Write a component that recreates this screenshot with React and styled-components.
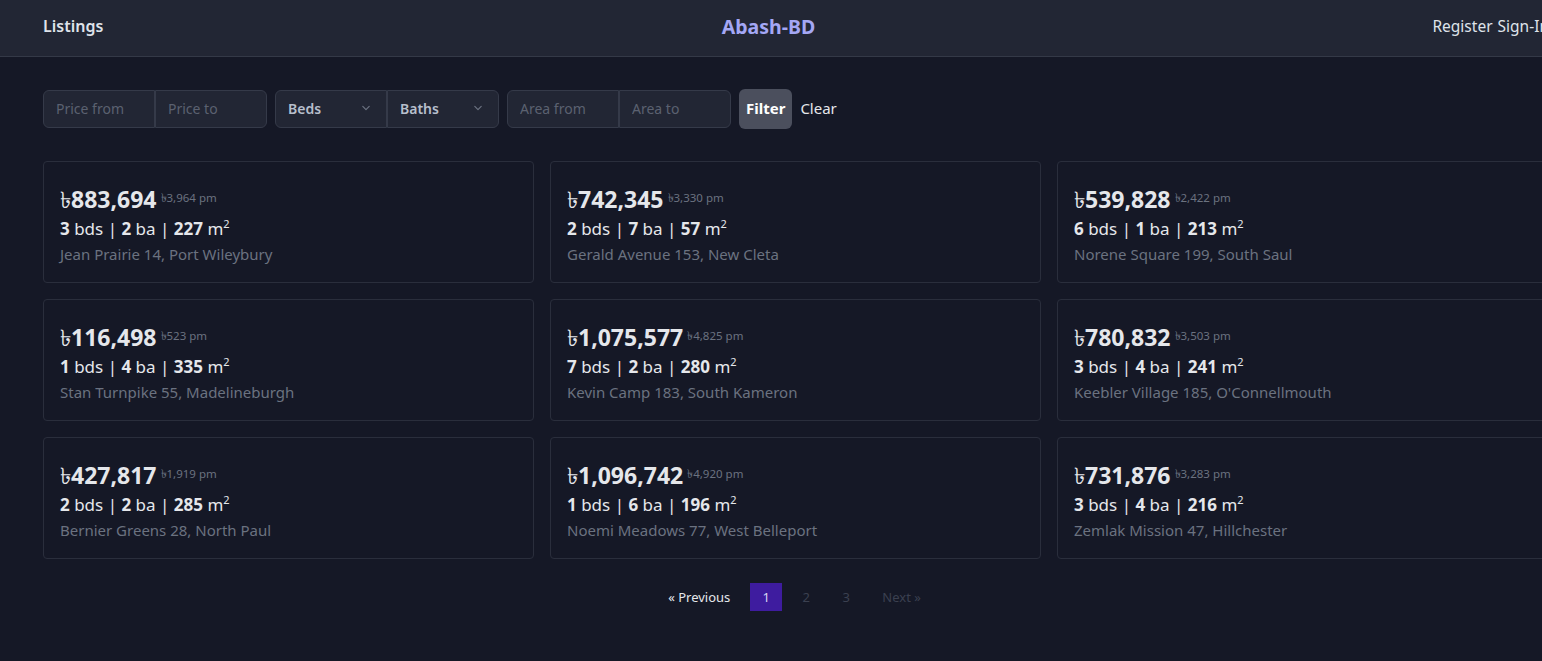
import React from 'react';
import styled, { createGlobalStyle } from 'styled-components';

const GlobalStyle = createGlobalStyle`
  html, body {
    margin: 0;
    padding: 0;
    background: #151826;
    overflow-x: hidden;
  }
  body {
    font-family: "Noto Sans", "Open Sans", sans-serif;
    color: #e5e7eb;
  }
  * { box-sizing: border-box; }
`;

const Page = styled.div`
  min-height: 661px;
  width: 1589px;
`;

const Header = styled.header`
  display: grid;
  grid-template-columns: 1fr auto 1fr;
  align-items: center;
  height: 57px;
  padding: 0 43px 4px;
  width: 1542px;
  background: #222634;
  border-bottom: 1px solid #343947;
`;

const NavLink = styled.a`
  font-size: 16px;
  font-weight: ${({ bold }) => (bold ? 600 : 400)};
  color: #dfe3ea;
  text-decoration: none;
`;

const Brand = styled.div`
  font-size: 19.5px;
  font-weight: 700;
  color: #a4a7f5;
  margin-right: 5px;
`;

const RightNav = styled.nav`
  display: flex;
  justify-content: flex-end;
  gap: 5px;
  margin-right: -50px;
  white-space: nowrap;
  a { font-size: 15.5px; }
`;

const Main = styled.main`
  padding: 32px 43px 40px;
`;

const FilterBar = styled.form`
  display: flex;
  align-items: center;
  gap: 8px;
  margin-bottom: 32px;
`;

const Group = styled.div`
  display: flex;
`;

const Field = styled.input`
  width: 112px;
  height: 38px;
  padding: 0 12px 2px;
  background: #222634;
  border: 1px solid #353a49;
  color: #dfe3ea;
  font-family: inherit;
  font-size: 14px;
  border-radius: ${({ first }) => (first ? '6px 0 0 6px' : '0 6px 6px 0')};
  &::placeholder { color: #5b6170; }
  outline: none;
`;

const Select = styled.div`
  display: flex;
  align-items: center;
  justify-content: space-between;
  width: 112px;
  height: 38px;
  padding: 0 12px 2px 12px;
  background: #222634;
  border: 1px solid #353a49;
  border-radius: ${({ first }) => (first ? '6px 0 0 6px' : '0 6px 6px 0')};
  font-size: 14px;
  font-weight: 600;
  color: #b7bfcc;
`;

const Button = styled.button`
  height: 40px;
  padding: 0 7px 2px;
  border: none;
  border-radius: 6px;
  background: #4b4f5d;
  color: #fff;
  font-family: inherit;
  font-size: 15px;
  font-weight: 700;
`;

const ClearLink = styled.span`
  font-size: 15px;
  color: #e5e7eb;
  margin-bottom: 2px;
`;

const Grid = styled.div`
  display: grid;
  grid-template-columns: repeat(3, 491px);
  gap: 16px;
`;

const Card = styled.div`
  height: 122px;
  padding: 22px 16px 0;
  border: 1px solid #2a2e3c;
  border-radius: 4px;
`;

const PriceRow = styled.div`
  display: flex;
  align-items: flex-start;
  gap: 4px;
  line-height: 30px;
`;

const Price = styled.span`
  font-size: 23px;
  font-weight: 700;
  color: #e5e7eb;
`;

const Taka = styled.span`
  font-weight: 400;
`;

const Monthly = styled.span`
  font-size: 11.5px;
  line-height: 28px;
  color: #6b7280;
`;

const Specs = styled.div`
  font-size: 17px;
  line-height: 29px;
  color: #e5e7eb;
  b { font-weight: 700; }
  sup { font-size: 11px; line-height: 0; }
`;

const Address = styled.div`
  font-size: 15px;
  line-height: 23px;
  color: #6b7280;
`;

const Pagination = styled.nav`
  display: flex;
  justify-content: center;
  align-items: center;
  margin-top: 24px;
  font-size: 13px;
`;

const PageItem = styled.span`
  display: flex;
  align-items: center;
  justify-content: center;
  height: 28px;
  min-width: 32px;
  padding: 0 12px;
  margin: 0 4px;
  color: ${({ active, disabled }) => (active ? '#d9d6f5' : disabled ? '#3b4050' : '#e5e7eb')};
  background: ${({ active }) => (active ? '#3e1c9f' : 'transparent')};
`;

const listings = [
  { price: '883,694', pm: '3,964', bd: 3, ba: 2, area: 227, addr: 'Jean Prairie 14, Port Wileybury' },
  { price: '742,345', pm: '3,330', bd: 2, ba: 7, area: 57, addr: 'Gerald Avenue 153, New Cleta' },
  { price: '539,828', pm: '2,422', bd: 6, ba: 1, area: 213, addr: 'Norene Square 199, South Saul' },
  { price: '116,498', pm: '523', bd: 1, ba: 4, area: 335, addr: 'Stan Turnpike 55, Madelineburgh' },
  { price: '1,075,577', pm: '4,825', bd: 7, ba: 2, area: 280, addr: 'Kevin Camp 183, South Kameron' },
  { price: '780,832', pm: '3,503', bd: 3, ba: 4, area: 241, addr: "Keebler Village 185, O'Connellmouth" },
  { price: '427,817', pm: '1,919', bd: 2, ba: 2, area: 285, addr: 'Bernier Greens 28, North Paul' },
  { price: '1,096,742', pm: '4,920', bd: 1, ba: 6, area: 196, addr: 'Noemi Meadows 77, West Belleport' },
  { price: '731,876', pm: '3,283', bd: 3, ba: 4, area: 216, addr: 'Zemlak Mission 47, Hillchester' },
];

const Chevron = () => (
  <svg width="16" height="16" viewBox="0 0 20 20" fill="none" stroke="#6b7280" strokeWidth="1.5">
    <path d="M6 8l4 4 4-4" strokeLinecap="round" strokeLinejoin="round" />
  </svg>
);

const App = () => (
  <Page>
    <GlobalStyle />
    <Header>
      <NavLink bold>Listings</NavLink>
      <Brand>Abash-BD</Brand>
      <RightNav>
        <NavLink>Register</NavLink>
        <NavLink>Sign-In</NavLink>
      </RightNav>
    </Header>
    <Main>
      <FilterBar onSubmit={(e) => e.preventDefault()}>
        <Group>
          <Field first placeholder="Price from" />
          <Field placeholder="Price to" />
        </Group>
        <Group>
          <Select first>Beds <Chevron /></Select>
          <Select>Baths <Chevron /></Select>
        </Group>
        <Group>
          <Field first placeholder="Area from" />
          <Field placeholder="Area to" />
        </Group>
        <Button type="submit">Filter</Button>
        <ClearLink>Clear</ClearLink>
      </FilterBar>
      <Grid>
        {listings.map((l) => (
          <Card key={l.addr}>
            <PriceRow>
              <Price><Taka>৳</Taka>{l.price}</Price>
              <Monthly>৳{l.pm} pm</Monthly>
            </PriceRow>
            <Specs>
              <b>{l.bd}</b> bds | <b>{l.ba}</b> ba | <b>{l.area}</b> m<sup>2</sup>
            </Specs>
            <Address>{l.addr}</Address>
          </Card>
        ))}
      </Grid>
      <Pagination>
        <PageItem>« Previous</PageItem>
        <PageItem active>1</PageItem>
        <PageItem disabled>2</PageItem>
        <PageItem disabled>3</PageItem>
        <PageItem disabled>Next »</PageItem>
      </Pagination>
    </Main>
  </Page>
);

export default App;
